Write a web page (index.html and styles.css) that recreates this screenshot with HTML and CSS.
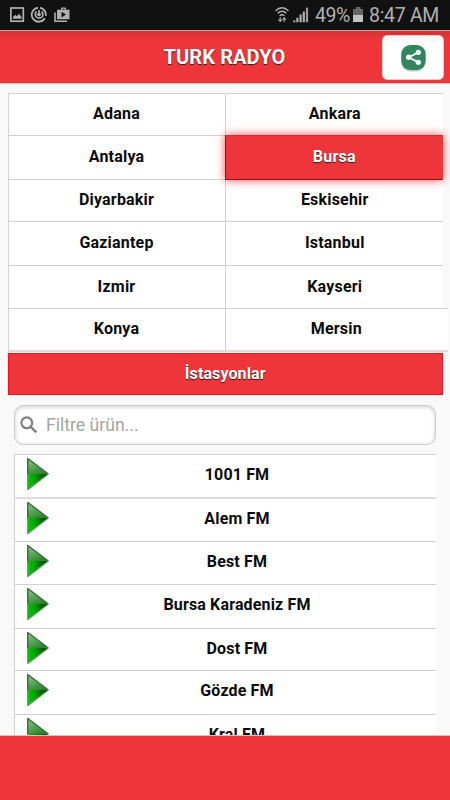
FILE: index.html
```html
<!DOCTYPE html>
<html lang="tr">
<head>
<meta charset="utf-8">
<title>TURK RADYO</title>
<link rel="stylesheet" href="styles.css">
</head>
<body>
<svg class="defs" width="0" height="0" aria-hidden="true">
  <defs>
    <linearGradient id="shine" x1="0" y1="0" x2="0.6" y2="1">
      <stop offset="0" stop-color="#8cc98a"/><stop offset="1" stop-color="#2b852b"/>
    </linearGradient>
    <linearGradient id="deep" x1="0" y1="0.6" x2="1" y2="0.4">
      <stop offset="0" stop-color="#00c800"/><stop offset="0.35" stop-color="#00a000"/><stop offset="0.85" stop-color="#063d06"/>
    </linearGradient>
    <symbol id="play" viewBox="0 0 24 34">
      <path d="M1.8 1.5L22.3 17L1.8 32.5Z" fill="url(#deep)"/>
      <path d="M1.8 1.5L22.3 17H1.8Z" fill="url(#shine)"/>
      <path d="M1.8 17V1.5L22.3 17" fill="none" stroke="#39703b" stroke-width="1.5" stroke-linejoin="round"/>
      <path d="M1.8 17V32.5L22.3 17" fill="none" stroke="#4c9b4c" stroke-width="1.3" stroke-linejoin="round"/>
    </symbol>
  </defs>
</svg>
<div class="screen">
  <div class="status">
    <svg class="tray" width="62" height="18" viewBox="0 0 62 18" fill="none" stroke="#b0b0b0">
      <rect x=".9" y="1" width="12.4" height="13.2" stroke-width="1.7"/>
      <path d="M3 11.7V10L5.3 7.8L7 9.3L9 6.8L11.5 10V11.7Z" fill="#b0b0b0" stroke="none"/>
      <path d="M28 .8A7 7 0 1 0 34.8 11.3M30 .8A7 7 0 0 1 35.8 8.8" stroke-width="1.8"/>
      <path d="M26.6 4.5A3.8 3.8 0 1 0 31.6 4.5M29 3V8.3M27.2 6.8L29 8.6L30.8 6.8" stroke-width="1.7"/>
      <path d="M45 5.5V14.3H57" stroke-width="1.6"/>
      <path d="M47 2.7H51V1.4Q51 .5 52 .5H55Q56 .5 56 1.4V2.7H59.5V12.3H47ZM52.3 2.7H54.7V1.7H52.3ZM51.5 4.8V10.4L56 7.6Z" fill="#b0b0b0" fill-rule="evenodd" stroke="none"/>
    </svg>
    <div class="readout">
      <svg width="36" height="18" viewBox="0 0 36 18" fill="none" stroke="#b0b0b0">
        <path d="M.5 3.8Q7 -2.2 13.5 3.8M2.6 6.3Q7 2.2 11.4 6.3M4.7 8.8Q7 6.6 9.3 8.8" stroke-width="1.5"/>
        <path d="M5.2 10V14.5M3.4 12.5L5.2 14.5L7 12.5M9.2 15.3V10.8M7.5 12.6L9.2 10.8L11 12.6" stroke-width="1.1"/>
        <path d="M19.3 15.2V13.6M22.4 15.2V10.8M25.6 15.2V7.6M28.8 15.2V4.4" stroke-width="2.2"/>
        <path d="M32 15.2V.6" stroke="#9a9a9a" stroke-width="2.2"/>
      </svg>
      <span class="pct">49%</span>
      <svg class="battery" width="10" height="16" viewBox="0 0 10 16"><path d="M0 2H3V0H7.5V2H10V8H0Z" fill="#666"/><path d="M0 8H10V15H0Z" fill="#c2c2c2"/></svg>
      <span class="clock">8:47 AM</span>
    </div>
  </div>
  <header class="header">
    <h1>TURK RADYO</h1>
    <button class="share" aria-label="Paylaş">
      <svg width="27" height="29" viewBox="0 0 27 29">
        <rect x="1.3" y="3.5" width="24" height="25" rx="9" fill="#bdc9c4"/>
        <rect x="1.3" y="2" width="24.4" height="25" rx="9" fill="#318660"/>
        <path d="M18 9.5L9 14.3L18 19.3" fill="none" stroke="#fff" stroke-width="1.8"/>
        <circle cx="18.3" cy="9.3" r="2.6" fill="#fff"/><circle cx="8.7" cy="14.3" r="2.7" fill="#fff"/><circle cx="18.3" cy="19.3" r="2.6" fill="#fff"/>
      </svg>
    </button>
  </header>
  <main class="content">
    <nav class="cities">
      <a>Adana</a><a>Ankara</a>
      <a>Antalya</a><a class="active">Bursa</a>
      <a>Diyarbakir</a><a>Eskisehir</a>
      <a>Gaziantep</a><a>Istanbul</a>
      <a>Izmir</a><a>Kayseri</a>
      <a>Konya</a><a class="wide">Mersin</a>
    </nav>
    <h2 class="bar">İstasyonlar</h2>
    <div class="search">
      <svg width="18" height="18" viewBox="0 0 18 18" fill="none" stroke="#808080"><circle cx="6.8" cy="6.8" r="5.4" stroke-width="2.2"/><path d="M10.8 10.8L16.3 16.3" stroke-width="2.5"/></svg>
      <span>Filtre ürün...</span>
    </div>
    <ul class="stations">
      <li><svg><use href="#play"/></svg><span>1001 FM</span></li>
      <li><svg><use href="#play"/></svg><span>Alem FM</span></li>
      <li><svg><use href="#play"/></svg><span>Best FM</span></li>
      <li><svg><use href="#play"/></svg><span>Bursa Karadeniz FM</span></li>
      <li><svg><use href="#play"/></svg><span>Dost FM</span></li>
      <li><svg><use href="#play"/></svg><span>Gözde FM</span></li>
      <li><svg><use href="#play"/></svg><span>Kral FM</span></li>
    </ul>
  </main>
  <footer class="footer"></footer>
</div>
</body>
</html>
```
FILE: styles.css
```css
* { box-sizing: border-box; }
body { margin: 0; font-family: Roboto, "Liberation Sans", sans-serif; }
.defs { position: absolute; }
.screen { width: 450px; height: 800px; display: flex; flex-direction: column; overflow: hidden; background: #f9f9f9; }
.status { flex: none; height: 30px; background: #111; display: flex; justify-content: space-between; padding: 7px 11px 0 10px; color: #b0b0b0; }
.readout { display: flex; }
.readout svg { flex: none; }
.pct, .clock { font-size: 19.5px; line-height: 18px; white-space: nowrap; }
.pct { margin-left: 4px; width: 35px; letter-spacing: -.4px; }
.battery { margin-left: 3px; }
.clock { margin-left: 6px; width: 70px; letter-spacing: -.3px; }
.header { flex: none; height: 54px; border-top: 1px solid #b9aaa5; border-bottom: 1px solid #d5c5c2; background: linear-gradient(#d93235, #ee353a 12px); display: grid; grid-template-columns: 67px 1fr 68px; align-items: center; }
h1 { grid-column: 2; margin: 0; text-align: center; font-size: 20px; line-height: 24px; font-weight: 700; letter-spacing: .1px; color: #fff; text-shadow: 0 1px 1px #222; }
.share { width: 62px; height: 45px; margin: 1px 0 0; padding: 0; border: 1px solid #e4cccc; border-radius: 5px; background: linear-gradient(#f5f5f5, #fff 9px); display: flex; align-items: center; justify-content: center; }
.content { flex: 1; min-height: 0; overflow: hidden; padding: 9px 7px 0 8px; }
.cities { display: grid; grid-template-columns: 217px 217.5px; grid-template-rows: 42px 44px 42px 44px 43px 44px; width: 434.5px; padding-bottom: 1px; }
.cities a { border-top: 1px solid #d0d0d0; border-left: 1px solid #d3d3d3; background: #fff; display: flex; align-items: center; justify-content: center; font-size: 16px; font-weight: 700; letter-spacing: .2px; color: #0b0b0b; padding-bottom: 2px; }
.cities a:nth-child(odd) { padding-right: 1px; }
.cities a:nth-child(even) { padding-left: 1px; }
.cities a:nth-last-child(-n+2) { border-bottom: 2px solid #ddd; padding-bottom: 2px; }
.cities .active { position: relative; background: #ee353a; border: 1px solid #8f1015; border-top-color: #bd3337; border-right-color: #ee353a; margin-bottom: -1px; color: #fff; text-shadow: 0 1px 1px #222; box-shadow: 0 0 9px #f14a50; }
.cities .wide { margin-right: -5px; padding-right: 2px; }
.bar { margin: 0; height: 42px; width: 434.5px; border: 1px solid #f5121b; background: #ee353a; color: #fff; font-size: 16px; line-height: 40px; text-align: center; letter-spacing: .1px; text-shadow: 0 1px 1px #222; }
.search { margin: 10px 6px 0; width: 422px; height: 40px; border: 1px solid #ccc; border-radius: 9px; background: #fff; box-shadow: inset 0 1px 4px #ccc; display: flex; align-items: center; gap: 8px; padding: 0 0 1px 5px; color: #a5a5a5; font-size: 17.6px; line-height: 24px; }
.stations { list-style: none; width: 422px; margin: 9px 6px 0; padding: 0; display: grid; grid-template-rows: 43px 44px 43px 44px 42px 44px 43px; }
.stations li { border-top: 1px solid #d0d0d0; border-left: 1px solid #d0d0d0; background: #fff; display: flex; align-items: flex-start; padding: 2px 0 0 11px; font-size: 16px; font-weight: 700; letter-spacing: .15px; color: #0b0b0b; }
.stations li:nth-child(2) { padding-top: 3px; border-top-width: 2px; border-top-color: #ddd; padding-top: 2px; }
.stations svg { flex: none; width: 24px; height: 34px; }
.stations span { flex: 1; padding: 8px 12px 0 0; text-align: center; line-height: 20px; }
.footer { flex: none; height: 65px; background: #ee353a; border-top: 1px solid #cfc3c2; }
```
